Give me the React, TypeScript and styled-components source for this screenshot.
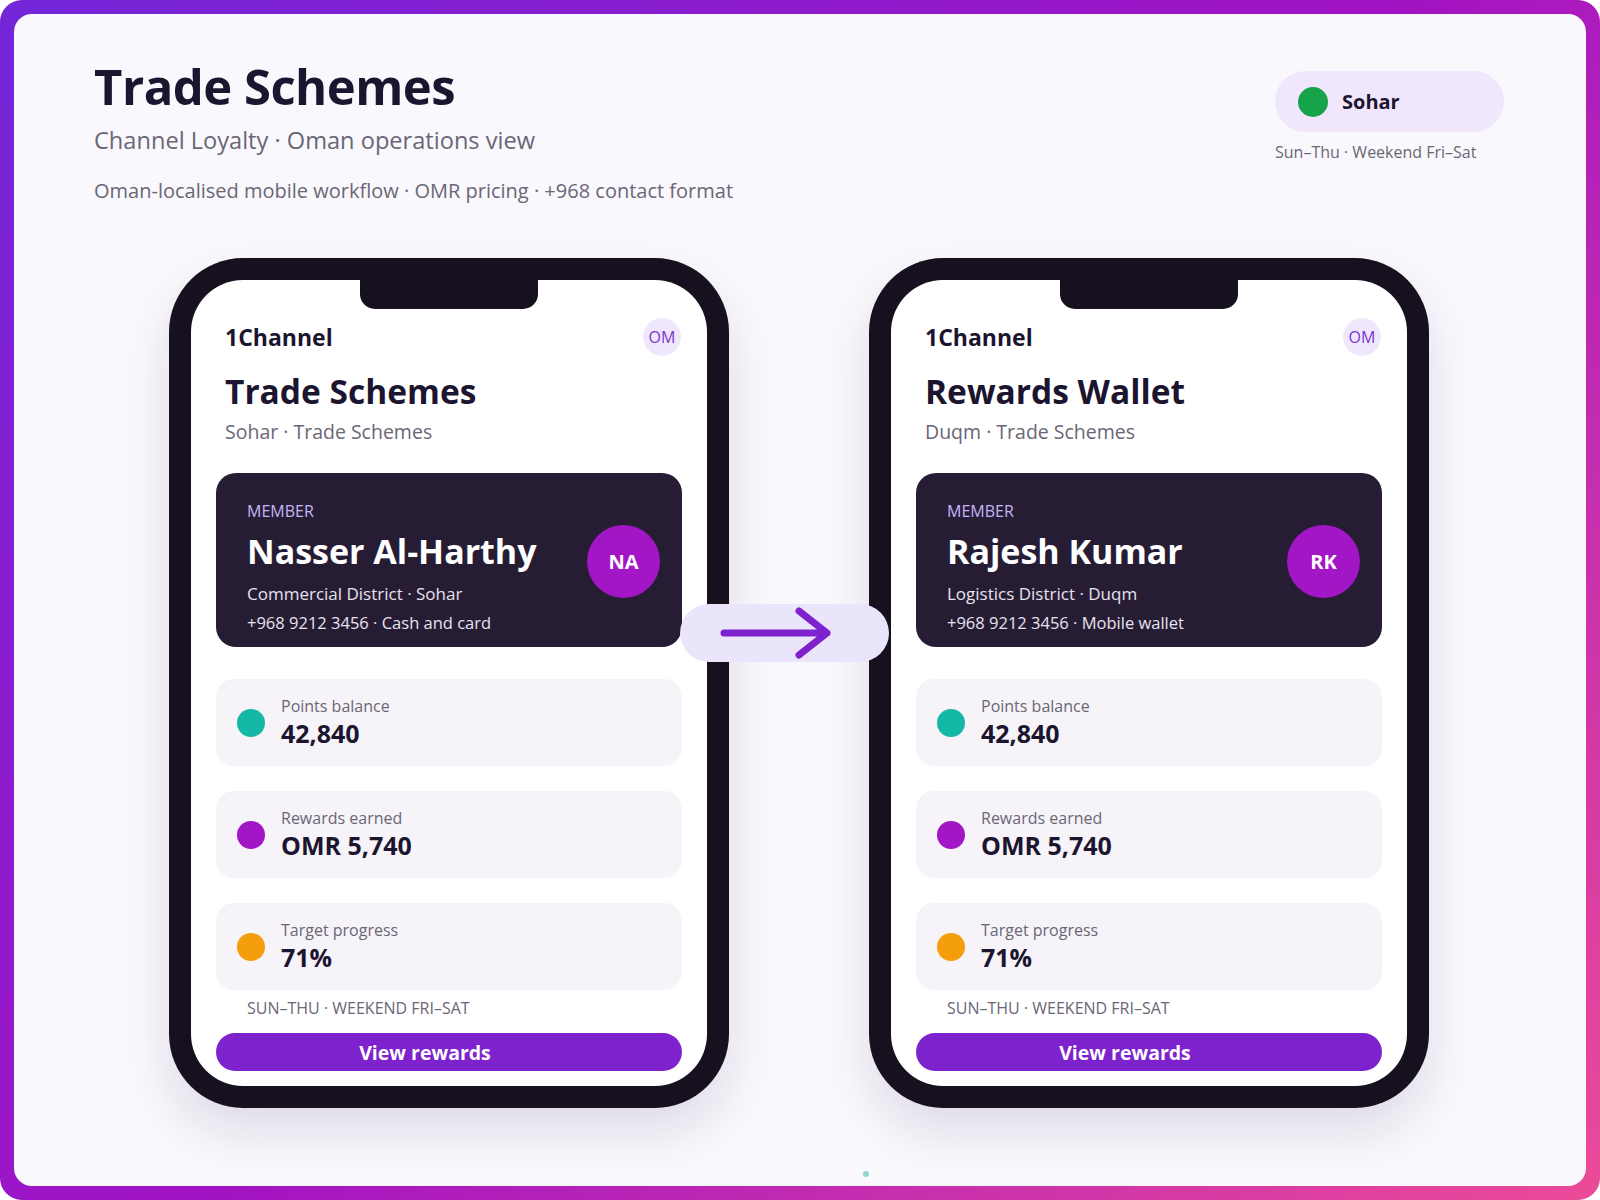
import React from 'react';
import styled, { createGlobalStyle } from 'styled-components';

const GlobalStyle = createGlobalStyle`
  html, body {
    margin: 0;
    padding: 0;
    background: #ffffff;
  }
  body {
    font-family: 'Open Sans', 'Noto Sans', sans-serif;
    color: #1c1530;
  }
  * {
    box-sizing: border-box;
  }
`;

const Frame = styled.div`
  width: 1600px;
  height: 1200px;
  padding: 14px;
  border-radius: 22px;
  background: linear-gradient(135deg, #7326d9 0%, #a113c3 50%, #ec4b98 100%);
`;

const Canvas = styled.div`
  position: relative;
  height: 100%;
  border-radius: 18px;
  background: #f9f8fc;
  padding: 42px 82px 0 80px;
`;

const Header = styled.header`
  display: flex;
  justify-content: space-between;
  align-items: flex-start;
`;

const TitleBlock = styled.div`
  display: flex;
  flex-direction: column;
`;

const Title = styled.h1`
  margin: 0;
  font-size: 49px;
  line-height: 60px;
  font-weight: 700;
  letter-spacing: -0.5px;
  color: #1c1530;
`;

const Subtitle = styled.p`
  margin: 8px 0 0;
  font-size: 23.6px;
  line-height: 32px;
  color: #6b6676;
`;

const Note = styled.p`
  margin: 22px 0 0;
  font-size: 20px;
  line-height: 26px;
  color: #6b6676;
`;

const Region = styled.div`
  display: flex;
  flex-direction: column;
  gap: 10px;
  margin-top: 15px;
`;

const RegionPill = styled.div`
  display: flex;
  align-items: center;
  gap: 14px;
  width: 229px;
  height: 61px;
  padding-left: 23px;
  border-radius: 31px;
  background: #f1e7fd;
  font-size: 20px;
  font-weight: 700;
  color: #1c1530;
`;

const Dot = styled.span<{ $color: string; $size?: number }>`
  flex: none;
  width: ${(p) => p.$size ?? 28}px;
  height: ${(p) => p.$size ?? 28}px;
  border-radius: 50%;
  background: ${(p) => p.$color};
`;

const RegionNote = styled.div`
  font-size: 16px;
  line-height: 20px;
  color: #6b6676;
`;

const PhonesRow = styled.div`
  position: relative;
  display: flex;
  justify-content: center;
  gap: 140px;
  margin-top: 54px;
`;

const Phone = styled.div`
  width: 560px;
  height: 850px;
  padding: 22px;
  border-radius: 74px;
  background: #17101f;
  box-shadow: 0 24px 48px rgba(40, 20, 80, 0.12);
`;

const Screen = styled.div`
  position: relative;
  height: 100%;
  border-radius: 52px;
  background: #ffffff;
  display: flex;
  flex-direction: column;
  padding: 38px 25px 15px;
`;

const Notch = styled.div`
  position: absolute;
  top: 0;
  left: 50%;
  width: 178px;
  height: 29px;
  margin-left: -89px;
  border-radius: 0 0 15px 15px;
  background: #17101f;

  &::before,
  &::after {
    content: '';
    position: absolute;
    top: 0;
    width: 15px;
    height: 15px;
    background: #17101f;
  }
  &::before { left: 0; }
  &::after { right: 0; }
`;

const AppBar = styled.div`
  display: flex;
  justify-content: space-between;
  align-items: center;
  height: 38px;
  padding: 0 1px 0 9px;
`;

const Brand = styled.div`
  font-size: 23px;
  font-weight: 700;
  color: #1c1530;
`;

const Locale = styled.div`
  width: 38px;
  height: 38px;
  border-radius: 50%;
  background: #efe8fc;
  color: #7e35d0;
  font-size: 16px;
  display: flex;
  align-items: center;
  justify-content: center;
`;

const ScreenTitle = styled.h2`
  margin: 15px 0 0;
  padding-left: 9px;
  font-size: 33.5px;
  line-height: 41px;
  font-weight: 700;
  color: #1c1530;
`;

const ScreenSub = styled.div`
  margin-top: 7px;
  padding-left: 9px;
  font-size: 19.5px;
  line-height: 26px;
  color: #6b6676;
`;

const MemberCard = styled.div`
  display: flex;
  align-items: center;
  justify-content: space-between;
  height: 174px;
  margin-top: 28px;
  padding: 28px 22px 13px 31px;
  border-radius: 20px;
  background: #261d34;
`;

const MemberInfo = styled.div`
  display: flex;
  flex-direction: column;
`;

const MemberLabel = styled.div`
  font-size: 16px;
  line-height: 20px;
  color: #c5b5f4;
`;

const MemberName = styled.div`
  margin-top: 8px;
  font-size: 34px;
  line-height: 44px;
  font-weight: 700;
  color: #ffffff;
`;

const MemberLine = styled.div<{ $gap: number; $size: number }>`
  margin-top: ${(p) => p.$gap}px;
  font-size: ${(p) => p.$size}px;
  line-height: 23px;
  color: #e7e2ef;
`;

const Avatar = styled.div`
  width: 73px;
  height: 73px;
  margin-bottom: 12px;
  border-radius: 50%;
  background: #a216c5;
  color: #ffffff;
  font-size: 20px;
  font-weight: 700;
  display: flex;
  align-items: center;
  justify-content: center;
`;

const Stats = styled.div`
  display: flex;
  flex-direction: column;
  gap: 25px;
  margin-top: 32px;
`;

const StatCard = styled.div`
  display: flex;
  align-items: center;
  gap: 16px;
  height: 87px;
  padding-left: 21px;
  border-radius: 18px;
  background: #f6f4f8;
`;

const StatText = styled.div`
  display: flex;
  flex-direction: column;
  gap: 1px;
`;

const StatLabel = styled.div`
  font-size: 16px;
  line-height: 21px;
  color: #6b6676;
`;

const StatValue = styled.div`
  font-size: 25px;
  line-height: 31px;
  font-weight: 700;
  color: #1c1530;
`;

const Schedule = styled.div`
  margin-top: 8px;
  padding-left: 31px;
  font-size: 16px;
  line-height: 20px;
  color: #6b6676;
  text-transform: uppercase;
`;

const PrimaryButton = styled.button`
  margin-top: 15px;
  height: 38px;
  padding: 0 48px 0 0;
  border: none;
  border-radius: 19px;
  background: #7e22ce;
  color: #ffffff;
  font-family: inherit;
  font-size: 19.5px;
  font-weight: 700;
  cursor: pointer;
`;

const FlowArrow = styled.div`
  position: absolute;
  top: 346px;
  left: calc(50% - 119px);
  width: 209px;
  height: 58px;
  padding-left: 36px;
  border-radius: 29px;
  background: #ebe5fb;
  display: flex;
  align-items: center;
`;

const PagerDot = styled.span`
  position: absolute;
  left: 849px;
  top: 1157px;
  width: 6px;
  height: 6px;
  border-radius: 50%;
  background: #8fd8cf;
`;

interface Member {
  title: string;
  city: string;
  name: string;
  initials: string;
  district: string;
  payment: string;
}

const stats = [
  { label: 'Points balance', value: '42,840', color: '#14b8a6' },
  { label: 'Rewards earned', value: 'OMR 5,740', color: '#a216c5' },
  { label: 'Target progress', value: '71%', color: '#f59e0b' },
];

const screens: Member[] = [
  {
    title: 'Trade Schemes',
    city: 'Sohar',
    name: 'Nasser Al-Harthy',
    initials: 'NA',
    district: 'Commercial District',
    payment: 'Cash and card',
  },
  {
    title: 'Rewards Wallet',
    city: 'Duqm',
    name: 'Rajesh Kumar',
    initials: 'RK',
    district: 'Logistics District',
    payment: 'Mobile wallet',
  },
];

function PhoneScreen({ m }: { m: Member }) {
  return (
    <Phone>
      <Screen>
        <Notch />
        <AppBar>
          <Brand>1Channel</Brand>
          <Locale>OM</Locale>
        </AppBar>
        <ScreenTitle>{m.title}</ScreenTitle>
        <ScreenSub>{m.city} · Trade Schemes</ScreenSub>
        <MemberCard>
          <MemberInfo>
            <MemberLabel>MEMBER</MemberLabel>
            <MemberName>{m.name}</MemberName>
            <MemberLine $gap={9} $size={17}>
              {m.district} · {m.city}
            </MemberLine>
            <MemberLine $gap={6} $size={16.5}>
              +968 9212 3456 · {m.payment}
            </MemberLine>
          </MemberInfo>
          <Avatar>{m.initials}</Avatar>
        </MemberCard>
        <Stats>
          {stats.map((s) => (
            <StatCard key={s.label}>
              <Dot $color={s.color} />
              <StatText>
                <StatLabel>{s.label}</StatLabel>
                <StatValue>{s.value}</StatValue>
              </StatText>
            </StatCard>
          ))}
        </Stats>
        <Schedule>Sun–Thu · Weekend Fri–Sat</Schedule>
        <PrimaryButton>View rewards</PrimaryButton>
      </Screen>
    </Phone>
  );
}

function App() {
  return (
    <>
      <GlobalStyle />
      <Frame>
        <Canvas>
          <Header>
            <TitleBlock>
              <Title>Trade Schemes</Title>
              <Subtitle>Channel Loyalty · Oman operations view</Subtitle>
              <Note>Oman-localised mobile workflow · OMR pricing · +968 contact format</Note>
            </TitleBlock>
            <Region>
              <RegionPill>
                <Dot $color="#16a34a" $size={30} />
                Sohar
              </RegionPill>
              <RegionNote>Sun–Thu · Weekend Fri–Sat</RegionNote>
            </Region>
          </Header>
          <PhonesRow>
            {screens.map((m) => (
              <PhoneScreen key={m.title} m={m} />
            ))}
            <FlowArrow>
              <svg width="120" height="58" viewBox="0 0 120 58" fill="none">
                <path
                  d="M8 29 H111 M83 7 L111 29 L83 51"
                  stroke="#7e22ce"
                  strokeWidth="7"
                  strokeLinecap="round"
                  strokeLinejoin="round"
                />
              </svg>
            </FlowArrow>
          </PhonesRow>
          <PagerDot />
        </Canvas>
      </Frame>
    </>
  );
}

export default App;
